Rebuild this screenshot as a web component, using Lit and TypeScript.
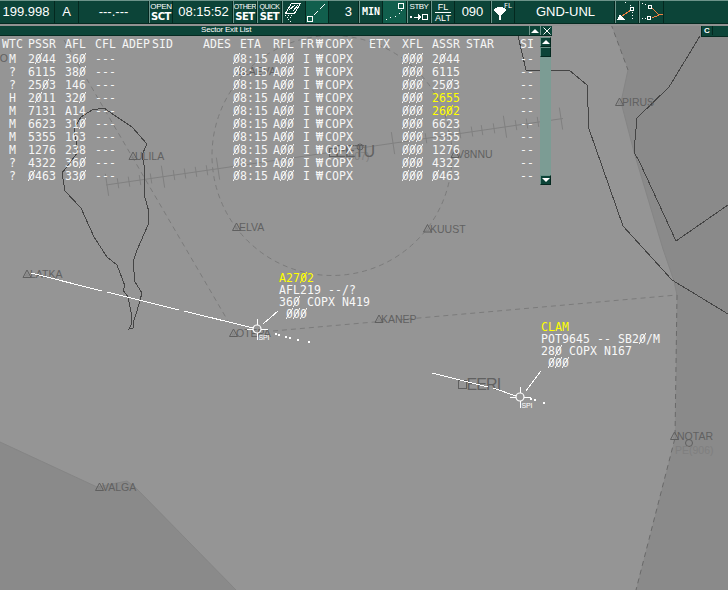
import { LitElement, html, svg, css } from "lit";
import { customElement, property } from "lit/decorators.js";

const zeros = (t: string) =>
  t.split(/(0)/).map((p) => (p === "0" ? html`<span class="zero">0</span>` : p));

const monoText = css`
  .zero {
    background: linear-gradient(to bottom right, transparent 45%, currentColor 48%, currentColor 52%, transparent 55%) no-repeat 0 1px / 7px 11px;
  }
`;

@customElement("radar-map")
class RadarMap extends LitElement {
  static styles = css`
    :host { display: block; }
    svg { display: block; }
    .land { fill: #959595; }
    .out { fill: #8a8a8a; }
    .edge { fill: none; stroke: #858585; }
    .border { fill: none; stroke: #444; shape-rendering: crispEdges; }
    .dash { fill: none; stroke: #7b7b7b; stroke-dasharray: 5 4; }
    .dark { stroke: #696969; }
    .axis { stroke: #808080; fill: none; }
    .fix { fill: none; stroke: #5f5f5f; }
    .inner { fill: none; stroke: #7c7c7c; stroke-width: 0.6; }
    .name { font: 10.500px "Liberation Sans", Arial, sans-serif; fill: #616161; }
    .big { font-size: 16px; letter-spacing: -0.9px; }
    .faint { fill: #7f7f7f; }
    .track { stroke: #fff; fill: none; shape-rendering: crispEdges; }
    .ring { stroke: #fff; fill: none; stroke-width: 1.2; }
    .dot { fill: #fff; }
    .spi { font: 7px "Liberation Sans", Arial, sans-serif; fill: #fff; }
  `;
  fixes: [string, number, number, number][] = [
    ["LAEVA", 241, 75, 243], ["ULILA", 133, 160, 135], ["PIRUS", 619.5, 106, 622],
    ["ELVA", 236.5, 231, 239], ["KUUST", 427.5, 232.5, 430], ["LATKA", 27, 278, 30],
    ["OTEPA", 233.5, 337, 236], ["KANEP", 379, 323, 381], ["V8NNU", 455, 158, 457],
    ["VALGA", 99.5, 491, 102], ["NOTAR", 674.5, 440, 677],
  ];
  ticks: [number, number][] = [
    [107, 11], [118, 5], [129, 5], [140, 5], [151, 5], [163, 11], [174, 5], [185, 5], [196, 5], [207, 5], [218, 11],
    [393, 11], [426, 5], [449, 5], [460, 5], [472, 5], [482, 5], [494, 5], [505, 11], [516, 5], [527, 5], [538, 5], [561, 11],
  ];
  target(x: number, y: number) {
    return svg`<circle class="ring" cx=${x} cy=${y} r="4"/>
      <path class="track" d="M${x} ${y - 10}v6M${x} ${y + 4}v7M${x - 10} ${y + 0.5}h6M${x + 4} ${y + 0.5}h7"/>
      <text class="spi" x=${x + 1.5} y=${y + 11} textLength="11">SPI</text>`;
  }
  render() {
    const axisY = (x: number) => 185 - (x - 106) * 0.146;
    return html`<svg width="728" height="590" viewBox="0 0 728 590">
      <rect class="land" width="728" height="590" />
      <path class="out" d="M611 24L628 70L621 102L634 152L663 249L674 281L677 295L675 438L636 590H728V24Z" />
      <path class="out" d="M0 442L97 487L127 481L137 489L236 590H0Z" />
      <path class="edge" d="M0 442L97 487L127 481L137 489L236 590M628 70L621 102L634 152L663 249L674 281L677 295" />
      <path class="dash dark" d="M611 24L628 70M677 295L675 438L636 590" />
      <circle class="dash" cx="332" cy="155.5" r="120" />
      <path class="dash" d="M64 40L228 321M273 331L677 295" />
      <path class="axis" d="M106 185L563 118.5" />
      ${this.ticks.map(([x, l]) => svg`<path class="axis" d="M${x - l * 0.15} ${axisY(x) - l}L${x + l * 0.15} ${axisY(x) + l}"/>`)}
      <path class="border" d="M62 173L65 191L81 208L94 237L107 257L117 265L125 286L123 290L128 297L131 312L132 323L129 329L133 328L133 323L137 311L142 293L135 282L133 262L137 250L148 225L149 212L144 194L144 165L142 155L147 144L132 127L114 115L104 108L92 110L81 117L76 125L74 130L78 152Z" />
      <path class="border" d="M518 36L526 70H569L587 85L589 129L623 226L672 280L728 314M700 36L669 87L637 118L634 152L640 163L676 241L728 205" />
      ${this.fixes.map(([n, x, y, t]) => svg`<path class="fix" d="M${x} ${y - 8}l4 7.500h-8z"/><path class="inner" d="M${x} ${y - 4.5}l1.5 2.5h-3z"/><text class="name" x=${t} y=${y}>${n}</text>`)}
      <text class="name" x="-6" y="62">LO</text>
      <text class="name faint" x="345" y="160">(907)</text>
      <text class="name big" x="335" y="157">EETU</text>
      <rect class="fix" x="329.500" y="148.500" width="8" height="8" />
      <circle class="fix" cx="360" cy="147" r="3" />
      <text class="name big" x="466.500" y="390">EERI</text>
      <rect class="fix" x="458.500" y="380.500" width="8" height="8" />
      <circle class="fix" cx="689" cy="443" r="3.500" />
      <text class="name faint" x="675" y="454">PE(906)</text>
      <path class="track" d="M31 273L102 291M107 292L179 310M184 311L253 328M263 324L278 311" />
      <path class="track" d="M432 373L488 387M493 388L516 396M526 391L541 371" />
      ${this.target(257, 329)} ${this.target(520, 397)}
      ${[[275, 333], [278, 334], [285, 336], [289, 337], [297, 339], [308, 341], [530, 398], [534, 399], [543, 402]].map(
        ([x, y]) => svg`<rect class="dot" x=${x} y=${y} width="2" height="2"/>`)}
    </svg>`;
  }
}

@customElement("tool-bar")
class ToolBar extends LitElement {
  static styles = css`
    :host { display: block; }
    .bar {
      display: grid; height: 24px; box-sizing: border-box;
      grid-template-columns: 55px 24px 70px 24px 60px 24px 25px 24px 23px 30px 24px 24px 24px 24px 36px 24px 100px 24px 25px 1fr;
      background: #0c4438; border-top: 1px solid #6d948a; border-bottom: 1px solid #052a21;
      color: #fff; font: 13px "Liberation Sans", Arial, sans-serif;
    }
    .cell {
      display: flex; flex-direction: column; align-items: center; justify-content: center;
      border-right: 1px solid #04281f; white-space: nowrap; overflow: hidden; min-width: 0;
    }
    .text { padding-bottom: 1px; }
    .left { padding-right: 2px; }
    .right { padding-left: 2px; }
    .btn { border-left: 1px solid #6d948a; }
    .on { background: #115f4d; }
    .end { align-items: flex-end; padding-right: 6px; padding-bottom: 1px; }
    .open { font-size: 8px; line-height: 9px; letter-spacing: -0.3px; }
    .stby { font-size: 8px; line-height: 10px; letter-spacing: -0.5px; }
    .tiny { font-size: 7px; line-height: 8px; letter-spacing: -0.4px; }
    .bold { font: bold 10px/11px "DejaVu Sans", sans-serif; letter-spacing: -0.5px; }
    .min { font: bold 10px/12px "DejaVu Sans Mono", monospace; }
    .fl { font-size: 9px; line-height: 10px; }
    .alt { border-top: 1px solid #fff; }
    svg { display: block; shape-rendering: crispEdges; }
    .w { stroke: #fff; fill: none; }
    .f { fill: #fff; }
    .o { stroke: #f08040; fill: none; }
    .dots { stroke: #fff; fill: none; stroke-dasharray: 1 2; }
    .lbl { font: 7px "DejaVu Sans", sans-serif; fill: #fff; }
  `;
  render() {
    return html`<div class="bar">
      <div class="cell text left">199.998</div>
      <div class="cell text">A</div>
      <div class="cell text">---.---</div>
      <div class="cell btn"><span class="open">OPEN</span><span class="bold">SCT</span></div>
      <div class="cell text right">08:15:52</div>
      <div class="cell btn"><span class="tiny">OTHER</span><span class="bold">SET</span></div>
      <div class="cell btn"><span class="tiny">QUICK</span><span class="bold">SET</span></div>
      <div class="cell btn"><svg width="22" height="22">
        <path class="w" d="M8.500 2.500H17.500L11.500 12.500H2.500ZM6 9L12 4M10 10L15 4" />
        <path class="dots" d="M2 14.500H11M4 16.500H9M5 18.500H8M6.500 20.500H7.500" /></svg></div>
      <div class="cell on"><svg width="22" height="22">
        <rect class="w" x="1.500" y="15.500" width="5" height="5" />
        <path class="w" d="M8 14L12 10M14 8L19 3" /></svg></div>
      <div class="cell end">3</div>
      <div class="cell btn"><span class="min">MIN</span></div>
      <div class="cell on"><svg width="22" height="22">
        <rect class="w" x="14.500" y="2.500" width="5" height="5" />
        <path class="f" d="M2 18h1v1h-1zM6 16h1v1h-1zM11 15h1v1h-1zM15 12h1v1h-1zM17 9h1v1h-1z" /></svg></div>
      <div class="cell btn"><span class="stby">STBY</span><svg width="22" height="10">
        <path class="f" d="M2 4h2v2h-2zM10 2l3 3l-3 3z" /><path class="w" d="M6 5.500H11M14.500 2.500h5v5h-5z" /></svg></div>
      <div class="cell btn"><span class="fl">FL</span><span class="fl alt">ALT</span></div>
      <div class="cell text">090</div>
      <div class="cell btn"><svg width="22" height="22">
        <path class="f" d="M2 8Q8 4 14 8V10L9 14V19H7V14L2 10Z" /><text class="lbl" x="12" y="7">FL</text></svg></div>
      <div class="cell text right">GND-UNL</div>
      <div class="cell btn"><svg width="22" height="22">
        <path class="o" d="M6 15L15 9" /><path class="f" d="M1 19L4 13L9 19Z" />
        <rect class="w" x="14.500" y="6.500" width="3" height="3" />
        <path class="dots" d="M16.500 11V20M15 5L9 1" /></svg></div>
      <div class="cell btn"><svg width="22" height="22">
        <path class="o" d="M11 7L18 14L22 13M11 17L18 14" />
        <rect class="w" x="7.500" y="4.500" width="3" height="3" /><rect class="w" x="6.500" y="15.500" width="3" height="3" />
        <path class="dots" d="M1 2.500L7 4M1 17.500H6" /></svg></div>
      <div></div>
    </div>`;
  }
}

@customElement("exit-list")
class ExitList extends LitElement {
  static styles = [monoText, css`
    :host { display: block; width: 552px; }
    .title {
      display: grid; grid-template-columns: 1fr 11px 12px; height: 10px; box-sizing: border-box;
      background: #0c4438; border-bottom: 1px solid #052a21;
    }
    .caption { padding-left: 201px; font: 8px/8px "Liberation Sans", Arial, sans-serif; letter-spacing: -0.2px; color: #fff; }
    .tb { border-left: 1px solid #6d948a; display: flex; align-items: center; justify-content: center; }
    .body { display: flex; padding-top: 1px; }
    .table { width: 540px; padding-top: 1px; font: 11.500px/13px "DejaVu Sans Mono", monospace; letter-spacing: 0.08px; color: #f6f6f6; }
    .row {
      display: grid; height: 13px; padding-left: 2px; white-space: pre;
      grid-template-columns: 26px 37px 30px 27px 30px 51px 37px 33px 27px 16px 9px 44px 33px 30px 34px 54px 1fr;
    }
    .head { height: 15px; }
    .data > :nth-child(1) { margin-left: 7px; }
    .data > :nth-child(8) { margin-left: -7px; }
    .data > :nth-child(10) { margin-left: 3px; }
    .warn { color: #ff0; }
    .scroll { width: 11px; height: 148px; background: #7c9c94; display: flex; flex-direction: column; }
    .sb { height: 10px; box-sizing: border-box; background: #0c4438; border: 1px solid #04281f; border-top-color: #6d948a; border-left-color: #6d948a; display: flex; align-items: center; justify-content: center; }
    .grow { flex: 1; }
    svg { display: block; }
    .f { fill: #fff; }
    .x { stroke: #fff; fill: none; }
  `];
  head = ["WTC", "PSSR", "AFL", "CFL", "ADEP", "SID", "ADES", "ETA", "RFL", "FR", "₩", "COPX", "ETX", "XFL", "ASSR", "STAR", "SI"];
  rows = [
    ["M", "2044", "360", "2044"], ["?", "6115", "380", "6115"], ["?", "2503", "146", "2503"],
    ["H", "2011", "320", "2655"], ["M", "7131", "A14", "2602"], ["M", "6623", "310", "6623"],
    ["M", "5355", "163", "5355"], ["M", "1276", "238", "1276"], ["?", "4322", "360", "4322"], ["?", "0463", "330", "0463"],
  ];
  render() {
    const up = html`<svg width="8" height="4"><path class="f" d="M0 4L4 0L8 4Z" /></svg>`;
    return html`
      <div class="title">
        <span class="caption">Sector Exit List</span>
        <span class="tb">${up}</span>
        <span class="tb"><svg width="8" height="8"><path class="x" d="M0.500 0.500L7.500 7.500M7.500 0.500L0.500 7.500" /></svg></span>
      </div>
      <div class="body">
        <div class="table">
          <div class="row head">${this.head.map((h) => html`<span>${h}</span>`)}</div>
          ${this.rows.map(([w, p, a, s]) => html`<div class="row data">
            <span>${w}</span><span>${zeros(p)}</span><span>${zeros(a)}</span><span>---</span><span></span><span></span><span></span>
            <span>${zeros("08:15")}</span><span>${zeros("A00")}</span><span>I</span><span>₩</span><span>COPX</span><span></span>
            <span>${zeros("000")}</span><span class=${p === s ? "" : "warn"}>${zeros(s)}</span><span></span><span>--</span>
          </div>`)}
        </div>
        <div class="scroll">
          <div class="sb">${up}</div><div class="sb"></div><div class="grow"></div>
          <div class="sb"><svg width="8" height="4"><path class="f" d="M0 0H8L4 4Z" /></svg></div>
        </div>
      </div>`;
  }
}

@customElement("track-label")
class TrackLabel extends LitElement {
  static styles = [monoText, css`
    :host { display: block; font: 11.500px/12px "DejaVu Sans Mono", monospace; letter-spacing: 0.08px; color: #f8f8f8; white-space: pre; }
    .call { color: #ff0; }
  `];
  @property({ attribute: false }) lines: string[] = [];
  render() {
    return this.lines.map((l, i) => html`<div class=${i ? "" : "call"}>${zeros(l)}</div>`);
  }
}

@customElement("app-root")
class AppRoot extends LitElement {
  static styles = css`
    :host { display: block; position: relative; width: 728px; height: 590px; overflow: hidden; background: #959595; }
    .map { position: absolute; inset: 0; }
    .front { position: relative; }
    .gap { height: 2px; background: #929292; }
    .panels { display: flex; justify-content: space-between; align-items: flex-start; }
    .side { width: 27px; height: 11px; box-sizing: border-box; background: #0c4438; border-left: 1px solid #04281f; border-bottom: 1px solid #052a21; color: #fff; font: bold 8px/9px "Liberation Sans", Arial, sans-serif; }
    .c { display: block; width: 10px; border-right: 1px solid #04281f; text-align: center; }
    .label { position: absolute; }
    .one { left: 279px; top: 272px; }
    .two { left: 541px; top: 321px; }
  `;
  render() {
    return html`
      <radar-map class="map"></radar-map>
      <div class="front">
        <tool-bar></tool-bar>
        <div class="gap"></div>
        <div class="panels"><exit-list></exit-list><div class="side"><span class="c">C</span></div></div>
      </div>
      <track-label class="label one" .lines=${["A2702", "AFL219 --/?", "360 COPX N419", " 000"]}></track-label>
      <track-label class="label two" .lines=${["CLAM", "POT9645 -- SB20/M", "280 COPX N167", " 000"]}></track-label>`;
  }
}
